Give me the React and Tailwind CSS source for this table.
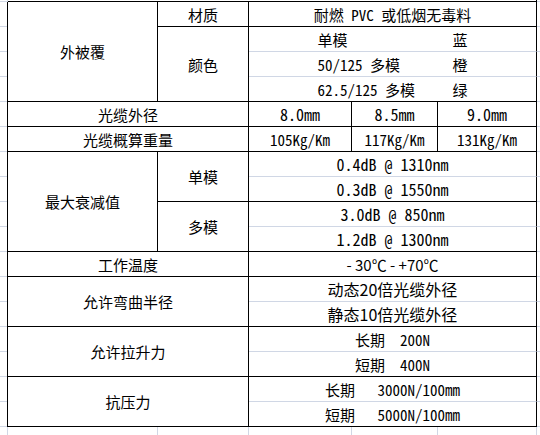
import React from "react";

const base =
  "flex items-center justify-center border-r border-b whitespace-nowrap overflow-hidden";
const BB = "border-r-black border-b-black";
const BG = "border-r-black border-b-[#d0d7e5]";
const GG = "border-r-[#d0d7e5] border-b-[#d0d7e5]";
const PROP = "font-['Noto_Sans_CJK_SC',sans-serif]";

function C({ className, children }) {
  return <div className={`${base} ${className}`}>{children}</div>;
}

function Pair({ a, b }) {
  return (
    <div className="flex w-[150px] justify-between">
      <span>{a}</span>
      <span>{b}</span>
    </div>
  );
}

export default function App() {
  const rows = Array.from({ length: 17 });
  return (
    <div className="h-[435px] w-[540px] overflow-hidden bg-white text-black font-['Noto_Sans_Mono_CJK_SC','Noto_Sans_CJK_SC',monospace] text-[15px] leading-none">
      <div className="grid grid-cols-[8px_150px_91px_103px_86px_99px_1fr] grid-rows-[2px_repeat(17,25px)_25px]">
        {/* top gridline row */}
        <div className={`col-start-1 row-start-1 border-r border-b ${GG}`} />
        <div className={`col-start-2 col-span-5 row-start-1 border-r border-b ${BB}`} />
        <div className="col-start-7 row-start-1 border-b border-b-[#d0d7e5]" />

        {/* left margin column */}
        <div className="col-start-1 row-start-2 row-span-17 flex flex-col border-r border-r-black">
          {rows.map((_, i) => (
            <div key={i} className="h-[25px] shrink-0 border-b border-b-[#d0d7e5]" />
          ))}
        </div>
        {/* right margin column */}
        <div className="col-start-7 row-start-2 row-span-17 flex flex-col">
          {rows.map((_, i) => (
            <div key={i} className="h-[25px] shrink-0 border-b border-b-[#d0d7e5]" />
          ))}
        </div>

        {/* 外被覆 group */}
        <C className={`col-start-2 row-start-2 row-span-4 ${BB}`}>外被覆</C>
        <C className={`col-start-3 row-start-2 ${BB}`}>材质</C>
        <C className={`col-start-3 row-start-3 row-span-3 ${BB}`}>颜色</C>
        <C className={`col-start-4 col-span-3 row-start-2 ${BB}`}>耐燃 PVC 或低烟无毒料</C>
        <C className={`col-start-4 col-span-3 row-start-3 ${BG}`}>
          <Pair a="单模" b="蓝" />
        </C>
        <C className={`col-start-4 col-span-3 row-start-4 ${BG}`}>
          <Pair a="50/125 多模" b="橙" />
        </C>
        <C className={`col-start-4 col-span-3 row-start-5 ${BB}`}>
          <Pair a="62.5/125 多模" b="绿" />
        </C>

        {/* 光缆外径 */}
        <C className={`col-start-2 col-span-2 row-start-6 ${BB}`}>光缆外径</C>
        <C className={`col-start-4 row-start-6 text-[16px] ${BB}`}>8.0mm</C>
        <C className={`col-start-5 row-start-6 text-[16px] ${BB}`}>8.5mm</C>
        <C className={`col-start-6 row-start-6 text-[16px] ${BB}`}>9.0mm</C>

        {/* 光缆概算重量 */}
        <C className={`col-start-2 col-span-2 row-start-7 ${BB}`}>光缆概算重量</C>
        <C className={`col-start-4 row-start-7 ${BB}`}>105Kg/Km</C>
        <C className={`col-start-5 row-start-7 ${BB}`}>117Kg/Km</C>
        <C className={`col-start-6 row-start-7 ${BB}`}>131Kg/Km</C>

        {/* 最大衰减值 */}
        <C className={`col-start-2 row-start-8 row-span-4 ${BB}`}>最大衰减值</C>
        <C className={`col-start-3 row-start-8 row-span-2 ${BB}`}>单模</C>
        <C className={`col-start-3 row-start-10 row-span-2 ${BB}`}>多模</C>
        <C className={`col-start-4 col-span-3 row-start-8 text-[16px] ${BG}`}>0.4dB @ 1310nm</C>
        <C className={`col-start-4 col-span-3 row-start-9 text-[16px] ${BB}`}>0.3dB @ 1550nm</C>
        <C className={`col-start-4 col-span-3 row-start-10 text-[16px] ${BG}`}>3.0dB @ 850nm</C>
        <C className={`col-start-4 col-span-3 row-start-11 text-[16px] ${BB}`}>1.2dB @ 1300nm</C>

        {/* 工作温度 */}
        <C className={`col-start-2 col-span-2 row-start-12 ${BB}`}>工作温度</C>
        <C className={`col-start-4 col-span-3 row-start-12 ${PROP} ${BB}`}>- 30℃ - +70℃</C>

        {/* 允许弯曲半径 */}
        <C className={`col-start-2 col-span-2 row-start-13 row-span-2 ${BB}`}>允许弯曲半径</C>
        <C className={`col-start-4 col-span-3 row-start-13 text-[16px] ${PROP} ${BG}`}>动态20倍光缆外径</C>
        <C className={`col-start-4 col-span-3 row-start-14 text-[16px] ${PROP} ${BB}`}>静态10倍光缆外径</C>

        {/* 允许拉升力 */}
        <C className={`col-start-2 col-span-2 row-start-15 row-span-2 ${BB}`}>允许拉升力</C>
        <C className={`col-start-4 col-span-3 row-start-15 whitespace-pre ${BG}`}>长期  200N</C>
        <C className={`col-start-4 col-span-3 row-start-16 whitespace-pre ${BB}`}>短期  400N</C>

        {/* 抗压力 */}
        <C className={`col-start-2 col-span-2 row-start-17 row-span-2 ${BB}`}>抗压力</C>
        <C className={`col-start-4 col-span-3 row-start-17 whitespace-pre ${BG}`}>长期   3000N/100mm</C>
        <C className={`col-start-4 col-span-3 row-start-18 whitespace-pre ${BB}`}>短期   5000N/100mm</C>

        {/* bottom gridline row */}
        <div className="col-start-1 row-start-19 border-r border-r-[#d0d7e5]" />
        <div className="col-start-2 row-start-19 border-r border-r-[#d0d7e5]" />
        <div className="col-start-3 row-start-19 border-r border-r-[#d0d7e5]" />
        <div className="col-start-4 row-start-19 border-r border-r-[#d0d7e5]" />
        <div className="col-start-5 row-start-19 border-r border-r-[#d0d7e5]" />
        <div className="col-start-6 row-start-19 border-r border-r-[#d0d7e5]" />
        <div className="col-start-7 row-start-19" />
      </div>
    </div>
  );
}
